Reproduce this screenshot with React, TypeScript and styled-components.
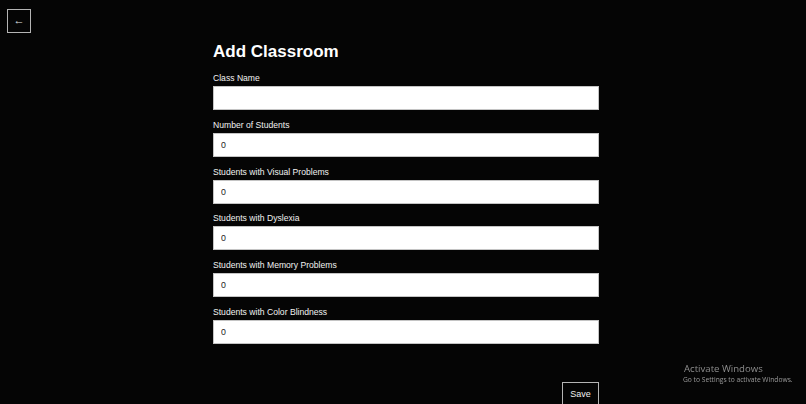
import React from 'react';
import styled, { createGlobalStyle } from 'styled-components';

const GlobalStyle = createGlobalStyle`
  html, body {
    margin: 0;
    padding: 0;
    background: #050505;
    font-family: "Liberation Sans", Arial, sans-serif;
    overflow: hidden;
  }
`;

const Page = styled.div`
  min-height: 404px;
  padding: 9px 7px 0;
  box-sizing: border-box;
  color: #fff;
`;

const BackButton = styled.button`
  width: 24px;
  height: 24px;
  padding: 0 0 2px;
  background: transparent;
  border: 1px solid #b5b5b5;
  color: #e8e8e8;
  font-family: "Liberation Sans", Arial, sans-serif;
  font-size: 11px;
  line-height: 1;
  display: flex;
  align-items: center;
  justify-content: center;
  box-sizing: border-box;
  cursor: pointer;
`;

const Main = styled.div`
  display: flex;
  justify-content: center;
  padding-left: 6px;
  margin-right: -7px;
  margin-left: -7px;
`;

const Form = styled.form`
  width: 386px;
  display: flex;
  flex-direction: column;
`;

const Title = styled.h1`
  margin: 9.4px 0 10.6px;
  font-size: 17px;
  line-height: 20px;
  font-weight: 700;
  color: #fff;
`;

const Field = styled.div`
  display: flex;
  flex-direction: column;
  margin-bottom: 9.8px;
`;

const Label = styled.label`
  display: block;
  font-size: 8.6px;
  line-height: 10px;
  margin-bottom: 3px;
  color: #f2f2f2;
`;

const Input = styled.input`
  height: 24px;
  box-sizing: border-box;
  border: 1px solid #c4c4c4;
  background: #fff;
  padding: 0 7px;
  font-family: "Liberation Sans", Arial, sans-serif;
  font-size: 8.8px;
  color: #222;
  outline: none;
`;

const Actions = styled.div`
  display: flex;
  justify-content: flex-end;
  margin-top: 28px;
`;

const SaveButton = styled.button`
  width: 37px;
  height: 25px;
  padding: 0;
  background: transparent;
  border: 1px solid #b5b5b5;
  color: #f0f0f0;
  font-family: "Liberation Sans", Arial, sans-serif;
  font-size: 9px;
  box-sizing: border-box;
  cursor: pointer;
`;

const Watermark = styled.div`
  position: fixed;
  left: 683px;
  top: 363px;
  font-family: "Open Sans", "Noto Sans", sans-serif;
  color: #8d8d8d;
  pointer-events: none;
`;

const WatermarkTitle = styled.div`
  font-size: 9.6px;
  line-height: 12px;
  padding-left: 1px;
`;

const WatermarkText = styled.div`
  font-size: 6.7px;
  line-height: 9px;
  color: #9a9a9a;
`;

const fields = [
  { label: 'Class Name', value: '' },
  { label: 'Number of Students', value: '0' },
  { label: 'Students with Visual Problems', value: '0' },
  { label: 'Students with Dyslexia', value: '0' },
  { label: 'Students with Memory Problems', value: '0' },
  { label: 'Students with Color Blindness', value: '0' },
];

function App() {
  return (
    <>
      <GlobalStyle />
      <Page>
        <BackButton type="button">←</BackButton>
        <Main>
          <Form onSubmit={(e) => e.preventDefault()}>
            <Title>Add Classroom</Title>
            {fields.map((f, i) => (
              <Field key={f.label}>
                <Label htmlFor={'field-' + i}>{f.label}</Label>
                <Input id={'field-' + i} defaultValue={f.value} type={i === 0 ? 'text' : 'number'} />
              </Field>
            ))}
            <Actions>
              <SaveButton type="submit">Save</SaveButton>
            </Actions>
          </Form>
        </Main>
      </Page>
      <Watermark>
        <WatermarkTitle>Activate Windows</WatermarkTitle>
        <WatermarkText>Go to Settings to activate Windows.</WatermarkText>
      </Watermark>
    </>
  );
}

export default App;
